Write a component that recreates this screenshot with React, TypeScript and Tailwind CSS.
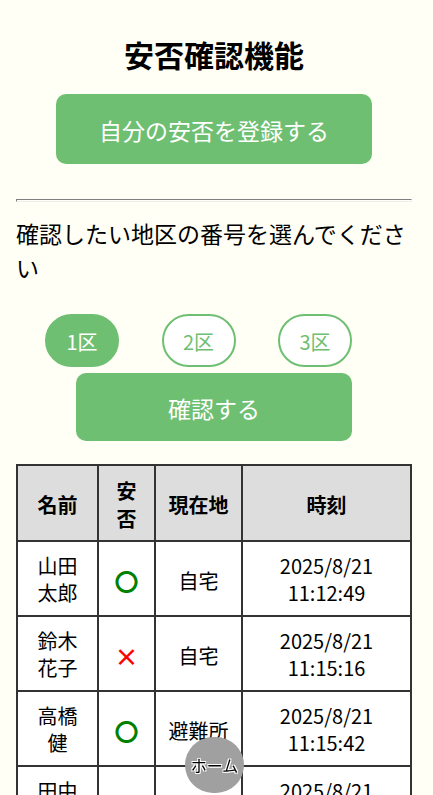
type Status = "safe" | "danger";

interface Row {
  name: string;
  status: Status;
  place: string;
  date: string;
  time: string;
}

const districts = ["1区", "2区", "3区"];

const rows: Row[] = [
  { name: "山田太郎", status: "safe", place: "自宅", date: "2025/8/21", time: "11:12:49" },
  { name: "鈴木花子", status: "danger", place: "自宅", date: "2025/8/21", time: "11:15:16" },
  { name: "高橋健", status: "safe", place: "避難所", date: "2025/8/21", time: "11:15:42" },
  { name: "田中美咲", status: "safe", place: "会社", date: "2025/8/21", time: "11:16:05" },
];

function StatusMark({ status }: { status: Status }) {
  return status === "safe" ? (
    <span className="font-bold text-[#008000]">〇</span>
  ) : (
    <span className="font-bold text-[#ff0000]">×</span>
  );
}

export default function App() {
  return (
    <div className="h-screen overflow-hidden bg-[#fffff5] pt-[34px] pr-[21px] pl-4 font-['Noto_Sans_CJK_JP',sans-serif] text-black">
      <main>
        <h1 className="text-center text-3xl leading-10 font-bold">安否確認機能</h1>
        <div className="mt-5 flex justify-center">
          <button type="button" className="h-[70px] w-4/5 rounded-[10px] bg-[#6fbf73] pt-0.5 text-[23px] text-white">
            自分の安否を登録する
          </button>
        </div>
        <hr className="mt-[35px] h-[3px] border border-[#eeeeee] border-t-[#808080] border-l-[#808080]" />

        <form className="mt-3.5" onSubmit={(e) => e.preventDefault()}>
          <fieldset>
            <legend className="text-[23px] leading-[34px]">確認したい地区の番号を選んでください</legend>
            <div className="mt-[30px] flex justify-between pr-[60px] pl-[29px]">
              {districts.map((d, i) => (
                <label key={d} className="cursor-pointer">
                  <input type="radio" name="district" value={d} defaultChecked={i === 0} className="peer sr-only" />
                  <span className="flex h-[53px] w-[74px] items-center justify-center rounded-full border-2 border-[#6fbf73] bg-white pt-0.5 text-xl text-[#6fbf73] peer-checked:bg-[#6fbf73] peer-checked:text-white">
                    {d}
                  </span>
                </label>
              ))}
            </div>
          </fieldset>
          <div className="mt-1.5 px-[60px]">
            <button type="submit" className="h-[68px] w-full rounded-[10px] bg-[#6fbf73] pt-0.5 text-[23px] text-white">
              確認する
            </button>
          </div>
        </form>

        <table className="mt-[23px] w-full table-fixed border-collapse bg-white text-center text-xl leading-[27px]">
          <colgroup>
            <col className="w-[81px]" />
            <col className="w-[57px]" />
            <col className="w-[87px]" />
            <col />
          </colgroup>
          <thead>
            <tr className="bg-[#dddddd] leading-7 font-bold">
              <th scope="col" className="border-2 border-[#333333] px-4 pt-[11px] pb-[7px]">名前</th>
              <th scope="col" className="border-2 border-[#333333] px-4 pt-[11px] pb-[7px]">安否</th>
              <th scope="col" className="border-2 border-[#333333] px-1 pt-[11px] pb-[7px]">現在地</th>
              <th scope="col" className="border-2 border-[#333333] px-4 pt-[11px] pb-[7px]">時刻</th>
            </tr>
          </thead>
          <tbody>
            {rows.map((r) => (
              <tr key={r.time} className="h-[75px]">
                <td className="border-2 border-[#333333] px-4 py-2">{r.name}</td>
                <td className="border-2 border-[#333333] pt-1 text-2xl leading-7">
                  <StatusMark status={r.status} />
                </td>
                <td className="border-2 border-[#333333] px-1 pt-1">{r.place}</td>
                <td className="border-2 border-[#333333] px-4">
                  {r.date}
                  <br />
                  {r.time}
                </td>
              </tr>
            ))}
          </tbody>
        </table>
      </main>

      <nav className="pointer-events-none fixed right-1 bottom-0.5 left-0 flex justify-center">
        <a
          href="#home"
          className="pointer-events-auto flex h-14 w-[59px] items-center justify-center rounded-full bg-[#a0a0a0] text-base whitespace-nowrap [text-shadow:1px_1px_0_#fff,-1px_-1px_0_#fff,1px_-1px_0_#fff,-1px_1px_0_#fff]"
        >
          ホーム
        </a>
      </nav>
    </div>
  );
}
